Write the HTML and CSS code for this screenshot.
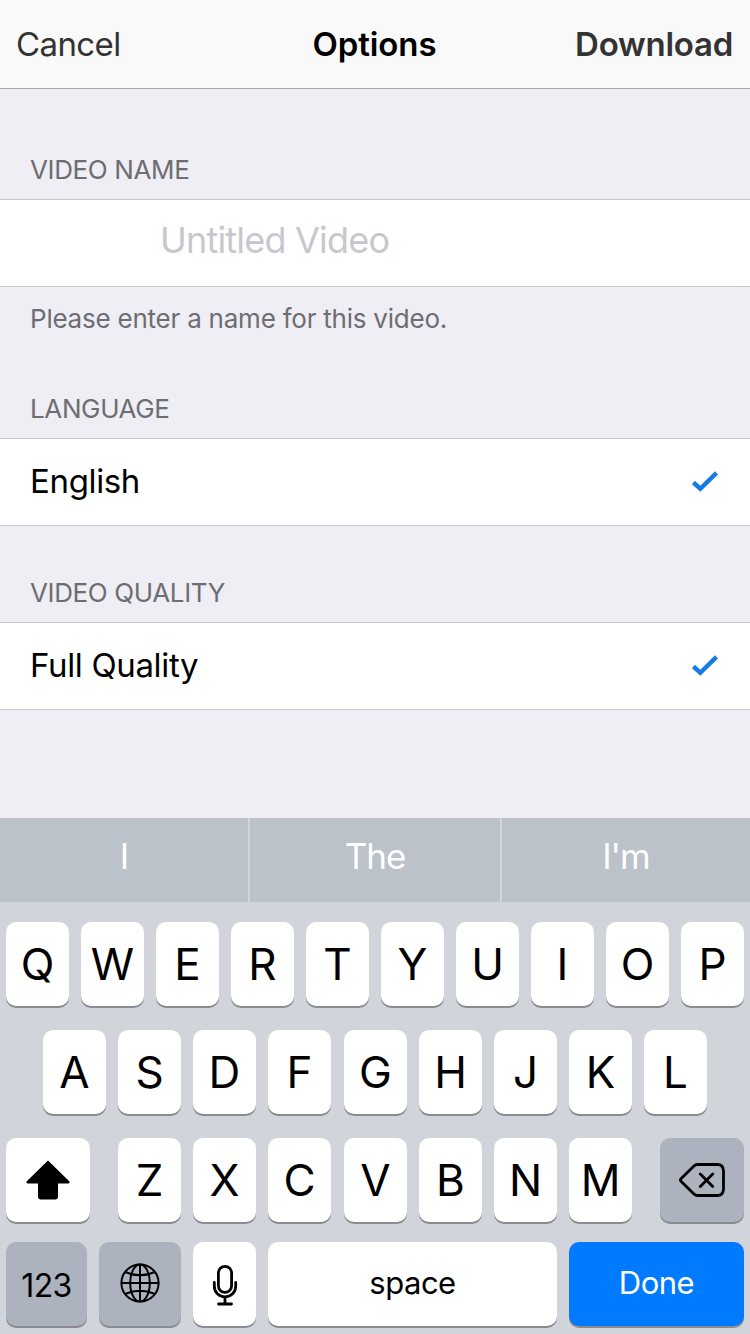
FILE: index.html
```
<!DOCTYPE html>
<html lang="en">
<head>
<meta charset="utf-8">
<title>Options</title>
<link rel="stylesheet" href="styles.css">
</head>
<body>
<div class="screen">
  <header class="nav">
    <span class="nav-cancel">Cancel</span>
    <span class="nav-title">Options</span>
    <span class="nav-download">Download</span>
  </header>
  <main class="form">
    <section class="group group-name">
      <h2 class="group-title">VIDEO NAME</h2>
      <div class="cell cell-input"><span class="placeholder">Untitled Video</span></div>
      <p class="group-note">Please enter a name for this video.</p>
    </section>
    <section class="group group-language">
      <h2 class="group-title">LANGUAGE</h2>
      <div class="cell"><span>English</span>
        <svg class="check" width="28" height="22" viewBox="0 0 28 22"><path d="M2.4 12.5 L9.3 18.7 L25.5 2.9" fill="none" stroke="#127be6" stroke-width="4.4"/></svg>
      </div>
    </section>
    <section class="group group-quality">
      <h2 class="group-title">VIDEO QUALITY</h2>
      <div class="cell"><span>Full Quality</span>
        <svg class="check" width="28" height="22" viewBox="0 0 28 22"><path d="M2.4 12.5 L9.3 18.7 L25.5 2.9" fill="none" stroke="#127be6" stroke-width="4.4"/></svg>
      </div>
    </section>
  </main>
  <section class="keyboard">
    <div class="suggestions">
      <span class="suggestion">I</span>
      <span class="suggestion">The</span>
      <span class="suggestion">I'm</span>
    </div>
    <div class="row row-top">
      <span class="key">Q</span><span class="key">W</span><span class="key">E</span><span class="key">R</span><span class="key">T</span><span class="key">Y</span><span class="key">U</span><span class="key">I</span><span class="key">O</span><span class="key">P</span>
    </div>
    <div class="row row-home">
      <span class="key">A</span><span class="key">S</span><span class="key">D</span><span class="key">F</span><span class="key key-nudge">G</span><span class="key">H</span><span class="key">J</span><span class="key">K</span><span class="key">L</span>
    </div>
    <div class="row row-bottom">
      <span class="key key-shift"><svg width="46" height="42" viewBox="0 0 46 42"><path d="M23 1.5 L44 22 Q45.5 24.5 43 24.5 H33 V37.5 Q33 40.5 30 40.5 H16 Q13 40.5 13 37.5 V24.5 H3 Q0.5 24.5 2 22 Z" fill="#000"/></svg></span>
      <span class="key">Z</span><span class="key">X</span><span class="key">C</span><span class="key key-nudge">V</span><span class="key">B</span><span class="key">N</span><span class="key">M</span>
      <span class="key key-delete"><svg width="48" height="36" viewBox="0 0 48 36"><path d="M19.5 2.5 H39 Q45.5 2.5 45.5 9 V27 Q45.5 33.5 39 33.5 H19.5 Q17.5 33.5 16 32 L3 19.3 Q1.8 18 3 16.7 L16 4 Q17.5 2.5 19.5 2.5 Z M22.3 12 L34.7 24.4 M34.7 12 L22.3 24.4" fill="none" stroke="#000" stroke-width="2.8" stroke-linecap="round" stroke-linejoin="round"/></svg></span>
    </div>
    <div class="row row-actions">
      <span class="key key-numbers">123</span>
      <span class="key key-globe"><svg width="40" height="40" viewBox="0 0 40 40"><g fill="none" stroke="#000" stroke-width="2"><circle cx="20" cy="20" r="18.6"/><ellipse cx="20" cy="20" rx="9.8" ry="18.6"/><path d="M20 1.4 V38.6 M1.4 20 H38.6 M5 9 Q20 15.6 35 9 M5 31 Q20 24.4 35 31"/></g></svg></span>
      <span class="key key-mic"><svg width="26" height="42" viewBox="0 0 26 42"><g fill="none" stroke="#000" stroke-width="2.8" stroke-linecap="round"><rect x="6.4" y="2.4" width="13.2" height="26" rx="6.6"/><path d="M2.3 18.5 V22 C2.3 28.5 7 32.8 13 32.8 S23.7 28.5 23.7 22 V18.5 M13 33 V40 M6.5 40 H19.5"/></g></svg></span>
      <span class="key key-space">space</span>
      <span class="key key-done">Done</span>
    </div>
  </section>
</div>
</body>
</html>
```
FILE: styles.css
```
* { box-sizing: border-box; }
body { margin: 0; font-family: Inter, "Liberation Sans", sans-serif; color: #000; }
.screen { width: 750px; height: 1334px; overflow: hidden; display: flex; flex-direction: column; background: #efeef4; }
.nav { height: 89px; flex: none; display: grid; grid-template-columns: 1fr auto 1fr; align-items: center; padding: 0 17px 0 16px; background: #f9f9f9; border-bottom: 1px solid #a9a9ac; font-size: 33px; line-height: 40px; color: #333; }
.nav-cancel { letter-spacing: -0.6px; }
.nav-title { color: #000; font-weight: 600; letter-spacing: -0.1px; }
.nav-download { font-weight: 600; text-align: right; letter-spacing: -0.25px; }
.form { height: 729px; flex: none; }
.group-title { margin: 0; padding: 0 30px; font-size: 26px; line-height: 32px; font-weight: 400; letter-spacing: -0.37px; color: #6d6d72; }
.group-name { padding-top: 65px; }
.group-name .cell { margin-top: 13px; }
.group-language { padding-top: 58px; }
.group-quality { padding-top: 51px; }
.cell { height: 88px; margin-top: 13px; display: flex; align-items: center; justify-content: space-between; padding: 0 31px 2px 30px; background: #fff; border: solid #c8c7cc; border-width: 1px 0; font-size: 33px; line-height: 40px; letter-spacing: -0.35px; }
.cell-input { padding: 0 0 6px 160px; font-size: 36px; letter-spacing: -0.8px; color: #c7c7cd; }
.group-note { margin: 0; padding: 16px 30px 0; font-size: 26px; line-height: 32px; letter-spacing: -0.23px; color: #6d6d72; }
.keyboard { height: 516px; flex: none; background: #d1d4db; }
.suggestions { height: 84px; display: grid; grid-template-columns: 248px 250px 248px; gap: 2px; }
.suggestion { display: flex; align-items: center; justify-content: center; padding-bottom: 8px; background: #bbc2ca; color: #fff; font-size: 35px; letter-spacing: -1px; }
.row { display: flex; gap: 12px; padding: 0 6px; }
.row-top { margin-top: 20px; }
.row-home { margin-top: 24px; padding-left: 43px; }
.row-bottom { margin-top: 24px; }
.row-actions { margin-top: 20px; }
.key { width: 63px; height: 84px; flex: none; display: flex; align-items: center; justify-content: center; border-radius: 10px; background: #fff; box-shadow: 0 2px 0 #898b90; font-size: 44px; padding-bottom: 1px; }
.key-nudge { margin-left: 1px; }
.key-shift { width: 84px; margin-right: 16px; }
.key-delete { width: 84px; margin-left: 16px; background: #acb2be; }
.key-numbers { width: 81px; padding: 2px 0 0; background: #acb2be; font-size: 32px; letter-spacing: -0.6px; }
.key-globe { width: 82px; padding-bottom: 2px; background: #acb2be; }
.key-mic { padding: 1px 0 0; }
.key-space { width: 289px; padding-bottom: 3px; font-size: 31px; letter-spacing: -0.5px; }
.key-done { width: 175px; padding-bottom: 3px; font-size: 31px; letter-spacing: -0.5px; color: #fff; background: #007aff; }
```
